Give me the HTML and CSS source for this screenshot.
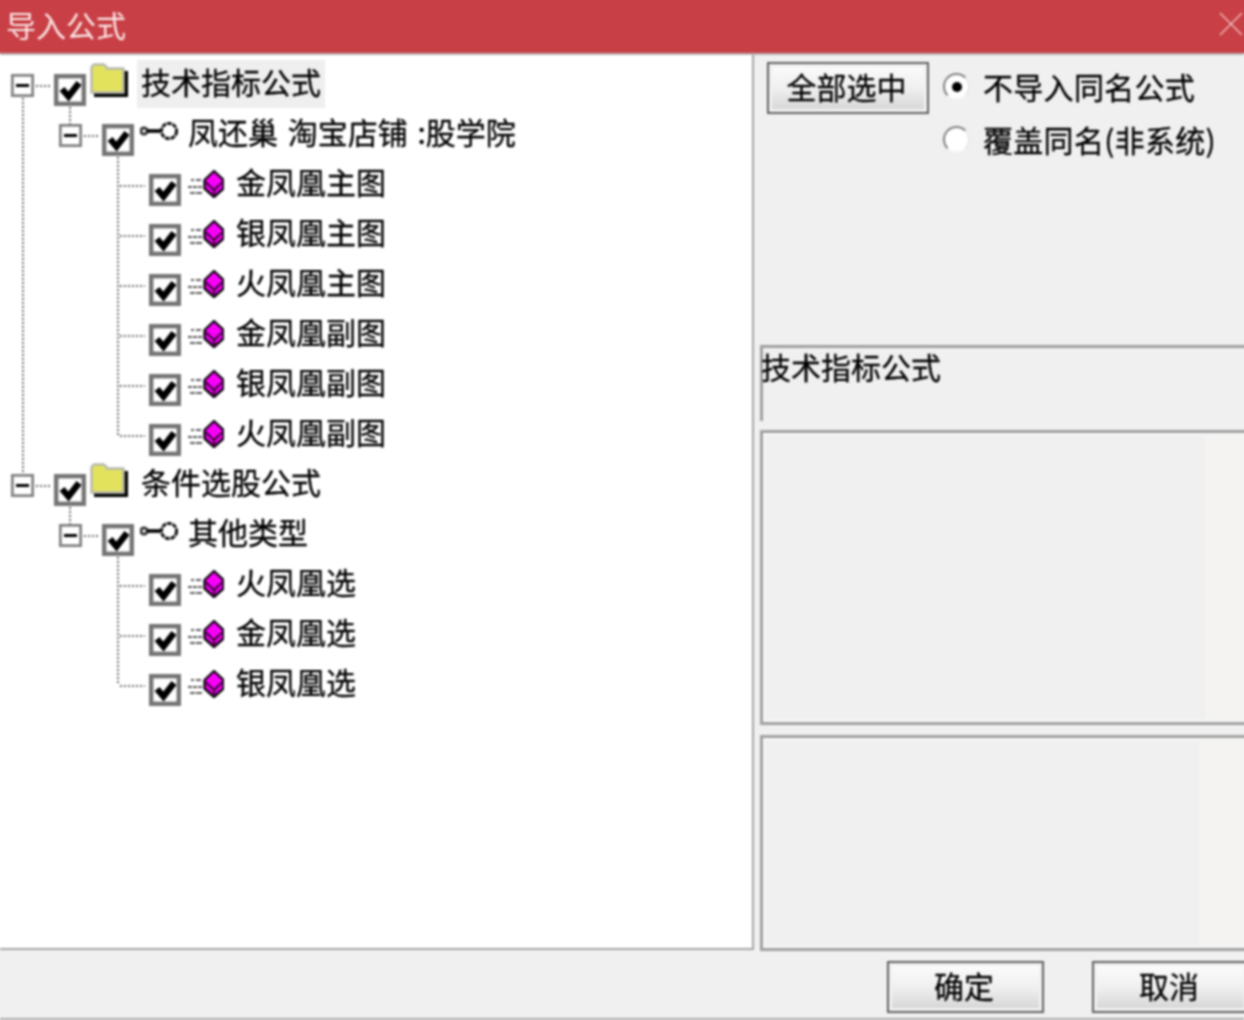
FILE: index.html
```html
<!DOCTYPE html>
<html lang="zh-CN">
<head>
<meta charset="utf-8">
<title>导入公式</title>
<link rel="stylesheet" href="styles.css">
</head>
<body>
<svg class="defs" width="0" height="0" aria-hidden="true">
  <defs>
    <pattern id="dither" width="4" height="4" patternUnits="userSpaceOnUse">
      <rect width="4" height="4" fill="#ecec70"/>
      <rect width="2" height="2" fill="#d8d84c"/>
      <rect x="2" y="2" width="2" height="2" fill="#d8d84c"/>
    </pattern>
    <symbol id="check" viewBox="0 0 32 32">
      <rect x="2.2" y="2.2" width="27.6" height="27.6" fill="#fff" stroke="#747474" stroke-width="4.4"/>
      <path d="M8 15 L14.5 22.5 L25 9" fill="none" stroke="#000" stroke-width="6.4"/>
    </symbol>
    <symbol id="expander" viewBox="0 0 23 23">
      <rect x="1.3" y="1.3" width="20.4" height="20.4" fill="#fff" stroke="#808080" stroke-width="2.8"/>
      <rect x="5" y="10" width="13" height="3" fill="#000"/>
    </symbol>
    <symbol id="folder" viewBox="0 0 38 34">
      <path d="M4 34 V8 H38 V34 Z" fill="#000"/>
      <path d="M1.5 29.5 V6 Q1.5 1.5 5 1.5 H13 Q15 1.5 17 5.5 H33.5 V29.5 Z" fill="url(#dither)" stroke="#b8b8b0" stroke-width="2.4"/>
    </symbol>
    <symbol id="key" viewBox="0 0 38 20">
      <circle cx="4" cy="9" r="3.2" fill="#fff" stroke="#333" stroke-width="2.8"/>
      <path d="M7 9 H21" stroke="#000" stroke-width="3.6"/>
      <circle cx="29" cy="9" r="7.6" fill="#fff" stroke="#111" stroke-width="3" stroke-dasharray="4.6 1"/>
    </symbol>
    <symbol id="formula" viewBox="0 0 37 28">
      <path d="M4 10 H7 M9 10 H14 M1 17 H5 M6 17 H10 M11 17 H15 M3 23 H8 M9 23 H15" stroke="#5c5c5c" stroke-width="2"/>
      <path d="M27 1 L36.5 10 V18.5 L27 27 L17.5 18.5 V10 Z" fill="#f800f8" stroke="#100810" stroke-width="2.4" stroke-linejoin="round"/>
      <path d="M18.5 12 L27 20 L35.5 12 M27 20 V26" fill="none" stroke="#4a004a" stroke-width="2.4"/>
    </symbol>
  </defs>
</svg>

<main class="dialog">
  <header class="titlebar">
    <h1 class="title">导入公式</h1>
    <svg class="close" viewBox="0 0 24 24" aria-label="关闭"><path d="M1 1 L23 23 M23 1 L1 23"/></svg>
  </header>

  <div class="content">
    <section class="tree">
      <div class="row level0">
        <span class="guide guide-root"></span><span class="guide guide-sub"></span>
        <svg class="expander"><use href="#expander"/></svg><span class="dash"></span>
        <svg class="check"><use href="#check"/></svg>
        <svg class="folder"><use href="#folder"/></svg>
        <span class="label selected">技术指标公式</span>
      </div>
      <div class="row level1">
        <span class="guide guide-long"></span>
        <svg class="expander"><use href="#expander"/></svg><span class="dash"></span>
        <svg class="check"><use href="#check"/></svg>
        <svg class="node-icon"><use href="#key"/></svg>
        <span class="label">凤还巢 淘宝店铺 :股学院</span>
      </div>
      <div class="row level2"><span class="guide guide-h"></span><svg class="check"><use href="#check"/></svg><svg class="leaf-icon"><use href="#formula"/></svg><span class="label">金凤凰主图</span></div>
      <div class="row level2"><span class="guide guide-h"></span><svg class="check"><use href="#check"/></svg><svg class="leaf-icon"><use href="#formula"/></svg><span class="label">银凤凰主图</span></div>
      <div class="row level2"><span class="guide guide-h"></span><svg class="check"><use href="#check"/></svg><svg class="leaf-icon"><use href="#formula"/></svg><span class="label">火凤凰主图</span></div>
      <div class="row level2"><span class="guide guide-h"></span><svg class="check"><use href="#check"/></svg><svg class="leaf-icon"><use href="#formula"/></svg><span class="label">金凤凰副图</span></div>
      <div class="row level2"><span class="guide guide-h"></span><svg class="check"><use href="#check"/></svg><svg class="leaf-icon"><use href="#formula"/></svg><span class="label">银凤凰副图</span></div>
      <div class="row level2"><span class="guide guide-h"></span><svg class="check"><use href="#check"/></svg><svg class="leaf-icon"><use href="#formula"/></svg><span class="label">火凤凰副图</span></div>
      <div class="row level0">
        <span class="guide guide-sub"></span>
        <svg class="expander"><use href="#expander"/></svg><span class="dash"></span>
        <svg class="check"><use href="#check"/></svg>
        <svg class="folder"><use href="#folder"/></svg>
        <span class="label plain">条件选股公式</span>
      </div>
      <div class="row level1">
        <span class="guide guide-short"></span>
        <svg class="expander"><use href="#expander"/></svg><span class="dash"></span>
        <svg class="check"><use href="#check"/></svg>
        <svg class="node-icon"><use href="#key"/></svg>
        <span class="label">其他类型</span>
      </div>
      <div class="row level2"><span class="guide guide-h"></span><svg class="check"><use href="#check"/></svg><svg class="leaf-icon"><use href="#formula"/></svg><span class="label">火凤凰选</span></div>
      <div class="row level2"><span class="guide guide-h"></span><svg class="check"><use href="#check"/></svg><svg class="leaf-icon"><use href="#formula"/></svg><span class="label">金凤凰选</span></div>
      <div class="row level2"><span class="guide guide-h"></span><svg class="check"><use href="#check"/></svg><svg class="leaf-icon"><use href="#formula"/></svg><span class="label">银凤凰选</span></div>
    </section>

    <aside class="side">
      <div class="options">
        <button class="btn select-all" type="button">全部选中</button>
        <div class="radios">
          <label class="radio"><span class="dot on"></span>不导入同名公式</label>
          <label class="radio"><span class="dot"></span>覆盖同名(非系统)</label>
        </div>
      </div>
      <div class="group-label">技术指标公式</div>
      <div class="panel panel-mid"><div class="band band-mid"></div></div>
      <div class="panel panel-low"><div class="band band-low"></div></div>
    </aside>
  </div>

  <footer class="footer">
    <button class="btn action" type="button">确定</button>
    <button class="btn action" type="button">取消</button>
  </footer>
</main>
</body>
</html>
```

FILE: styles.css
```css
* { box-sizing: border-box; }
html, body { margin: 0; padding: 0; height: 100%; background: #f0f0f0; overflow: hidden; }
body { font-family: "Noto Sans CJK SC", "Liberation Sans", sans-serif; color: #000; font-size: 30px; -webkit-text-stroke: 0.3px #000; }
.defs { position: absolute; }

.dialog { width: 1244px; height: 1020px; display: flex; flex-direction: column; filter: blur(0.8px); background: #f0f0f0; box-shadow: 0 0 0 8px #f0f0f0; border-bottom: 2px solid #a8a8a8; }

.titlebar { height: 55px; flex: none; background: #c84046; display: flex; align-items: center; justify-content: space-between; padding: 0 1px 6px 6px; border-bottom: 2px solid #b9b2b2; box-shadow: 0 -8px 0 #c84046, -8px -8px 0 #c84046, 8px -8px 0 #c84046, -8px -2px 0 #c84046, 8px -2px 0 #c84046; }
.title { margin: 0; font-size: 30px; font-weight: 400; line-height: 46px; color: #fbe6e6; -webkit-text-stroke: 0; }
.close { width: 24px; height: 24px; }
.close path { fill: none; stroke: #eebcbc; stroke-width: 1.4; }

.content { height: 895px; flex: none; display: flex; }

.tree { width: 754px; flex: none; background: #fff; border-right: 2px solid #a4a4a4; border-bottom: 2px solid #a4a4a4; padding-top: 5px; box-shadow: -8px 0 0 #fff; }
.row { height: 50px; display: flex; align-items: flex-start; position: relative; }
.level0 { padding-left: 11px; }
.level1 { padding-left: 59px; }
.level2 { padding-left: 149px; }

.expander { width: 23px; height: 23px; margin-top: 14px; flex: none; }
.check { width: 32px; height: 32px; margin-top: 14px; flex: none; }
.folder { width: 38px; height: 34px; margin: 3px -1px 0 4px; flex: none; }
.node-icon { width: 38px; height: 20px; margin: 12px -1px 0 6px; flex: none; }
.leaf-icon { width: 37px; height: 28px; margin: 10px 0 0 6px; flex: none; }

.dash { width: 16px; height: 2px; margin: 25px 2px 0; flex: none; background: repeating-linear-gradient(90deg, #6c6c6c 0 2px, transparent 2px 4px); }

.label { line-height: 42px; white-space: nowrap; margin-left: 12px; word-spacing: 3px; }
.level1 .label { margin-left: 11px; }
.level0 .label { margin-left: 10px; padding: 0 4px; height: 48px; }
.selected { background: #efefef; }

.guide { position: absolute; }
.guide-root, .guide-sub, .guide-long, .guide-short { width: 2px; background: repeating-linear-gradient(180deg, #6c6c6c 0 2px, transparent 2px 4px); }
.guide-root { left: 22px; top: 38px; height: 376px; }
.guide-sub { left: 69px; top: 47px; height: 17px; }
.guide-long { left: 117px; top: 47px; height: 278px; }
.guide-short { left: 117px; top: 47px; height: 128px; }
.guide-h { left: 120px; top: 25px; width: 25px; height: 2px; background: repeating-linear-gradient(90deg, #6c6c6c 0 2px, transparent 2px 4px); }

.side { flex: 1; min-width: 0; padding-left: 6px; display: flex; flex-direction: column; }
.options { height: 290px; flex: none; display: flex; padding: 7px 0 0 7px; }

.btn { font: inherit; color: inherit; padding: 0 3px 4px 0; border: 2px solid #606060; background: linear-gradient(180deg, #fcfcfc 0%, #f0f0f0 50%, #d4d4d4 100%); box-shadow: inset 0 0 0 3px #f0f0f0; line-height: 1; }
.select-all { width: 162px; height: 52px; }

.radios { margin-left: 14px; display: flex; flex-direction: column; margin-top: -1px; }
.radio { height: 53px; display: flex; align-items: center; gap: 13px; white-space: nowrap; padding-bottom: 4px; letter-spacing: 0.3px; }
.dot { width: 27px; height: 27px; margin-top: 2px; border-radius: 50%; background: #fff; border: 2px solid; border-color: #808080 #e8e8e8 #f6f6f6 #808080; display: flex; align-items: center; justify-content: center; flex: none; }
.dot.on::after { content: ""; width: 10px; height: 10px; border-radius: 50%; background: #000; }

.group-label { height: 76px; flex: none; border-top: 3px solid #a0a0a0; border-left: 3px solid #a0a0a0; line-height: 36px; margin-right: -8px; text-indent: -2px; }

.panel { flex: none; border: 3px solid #a0a0a0; border-right: 0; background: #f0f0f0; display: flex; justify-content: flex-end; margin-right: -8px; box-shadow: inset 0 0 0 2px #f8f8f8; }
.panel-mid { height: 295px; margin-top: 9px; }
.panel-low { height: 216px; margin-top: 10px; }
.band { background: #f4f3f1; margin: 3px 0; }
.band-mid { width: 47px; }
.band-low { width: 53px; }

.footer { flex: 1; display: flex; justify-content: flex-end; gap: 48px; padding-top: 11px; margin-right: -5px; }
.action { width: 157px; height: 52px; }
```
